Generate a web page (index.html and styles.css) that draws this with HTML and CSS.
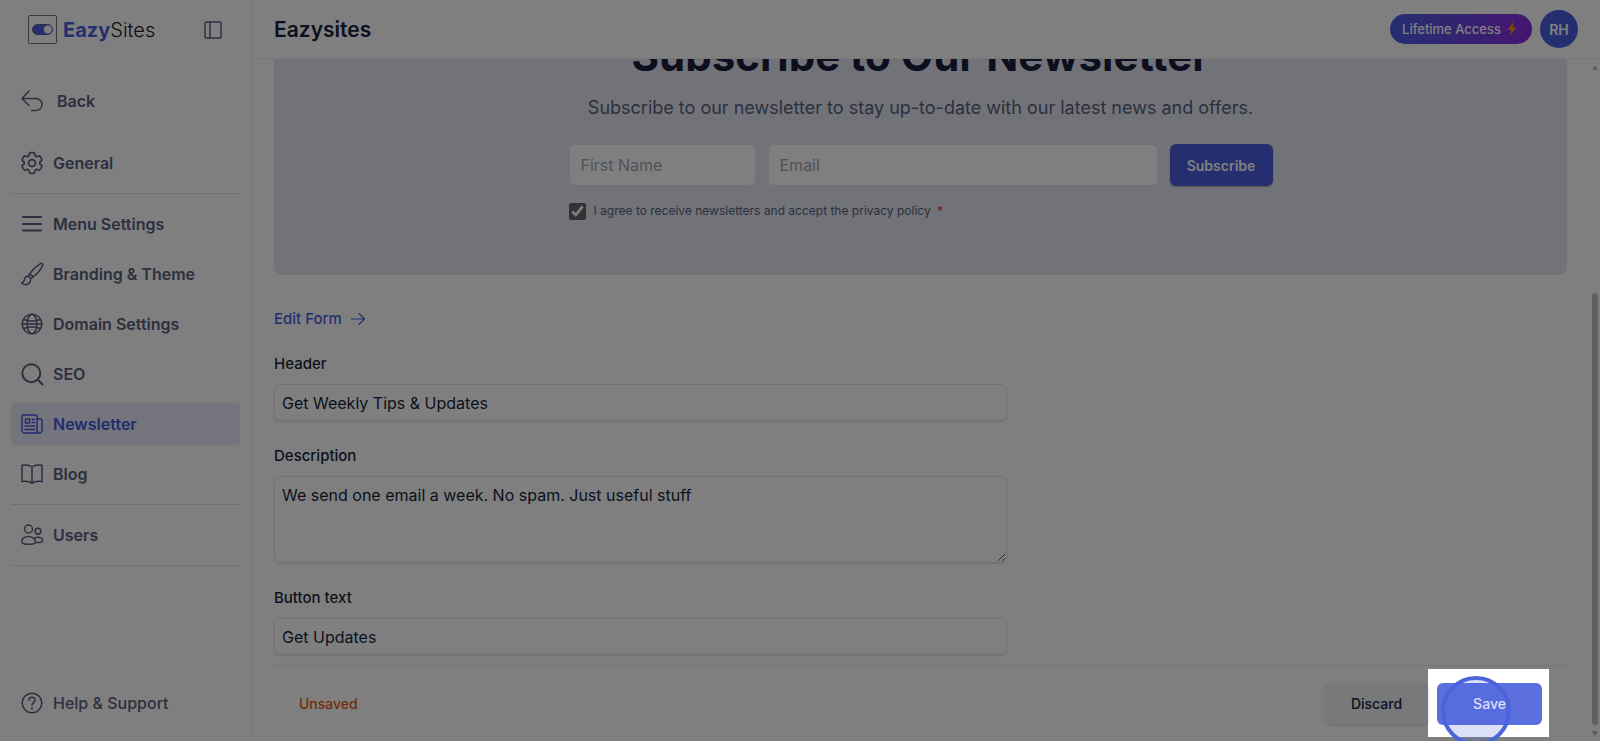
FILE: index.html
```html
<!DOCTYPE html>
<html lang="en">
<head>
    <meta charset="UTF-8">
    <title>Eazysites</title>
    <link rel="stylesheet" href="styles.css">
</head>
<body>
<div class="app">
    <aside class="sidebar">
        <div class="brand">
            <svg class="brand-mark" viewBox="0 0 30 30">
                <rect x="0.5" y="0.5" width="28" height="28" rx="1.5" fill="none" stroke="#777" />
                <rect x="4.5" y="9.5" width="20" height="10" rx="5" fill="#4a5fe0" />
                <circle cx="20" cy="14.500" r="4.500" fill="#fff" stroke="#4a5fe0" />
            </svg>
            <span class="brand-name"><b>Eazy</b>Sites</span>
            <button class="collapse" aria-label="Toggle sidebar">
                <svg viewBox="0 0 18 18"><rect x="1" y="1" width="16" height="16" rx="1.500" /><path d="M6 1v16" /></svg>
            </button>
        </div>

        <a class="item back" href="#">
            <svg viewBox="0 0 24 24"><path d="M9 2 2 9.500l7 7M2 9.500h14a6 6 0 0 1 0 12h-4.500" /></svg>
            Back
        </a>

        <nav class="menu">
            <a class="item" href="#">
                <svg viewBox="1.500 1.500 21 21"><path d="M9.594 3.94c.09-.542.56-.94 1.11-.94h2.593c.55 0 1.02.398 1.11.94l.213 1.281c.063.374.313.686.645.87.074.04.147.083.22.127.325.196.72.257 1.075.124l1.217-.456a1.125 1.125 0 0 1 1.37.49l1.296 2.247a1.125 1.125 0 0 1-.26 1.431l-1.003.827c-.293.241-.438.613-.43.992a7.723 7.723 0 0 1 0 .255c-.008.378.137.75.43.991l1.004.827c.424.35.534.955.26 1.43l-1.298 2.247a1.125 1.125 0 0 1-1.369.491l-1.217-.456c-.355-.133-.75-.072-1.076.124a6.47 6.47 0 0 1-.22.128c-.331.183-.581.495-.644.869l-.213 1.281c-.09.543-.56.94-1.11.94h-2.594c-.55 0-1.019-.398-1.11-.94l-.213-1.281c-.062-.374-.312-.686-.644-.87a6.52 6.52 0 0 1-.22-.127c-.325-.196-.72-.257-1.076-.124l-1.217.456a1.125 1.125 0 0 1-1.369-.49l-1.297-2.247a1.125 1.125 0 0 1 .26-1.431l1.004-.827c.292-.24.437-.613.43-.991a6.932 6.932 0 0 1 0-.255c.007-.38-.138-.751-.43-.992l-1.004-.827a1.125 1.125 0 0 1-.26-1.43l1.297-2.247a1.125 1.125 0 0 1 1.37-.491l1.216.456c.356.133.751.072 1.076-.124.072-.044.146-.086.22-.128.332-.183.582-.495.644-.869l.214-1.28Z" /><circle cx="12" cy="12" r="3" /></svg>
                General
            </a>
            <hr>
            <a class="item" href="#">
                <svg class="bold" viewBox="0 0 24 24"><path d="M3 5h18M3 12h18M3 18.500h18" /></svg>
                Menu Settings
            </a>
            <a class="item" href="#">
                <svg viewBox="0 0 24 24"><path d="M22.300 1.500c.9.700.5 1.800-.1 2.900-2 3.600-5 7.700-9 10.500l-3.400-3.200c2.700-4 6.500-7.500 10-9.600 1-.6 1.900-1.100 2.500-.6ZM9.800 11.700c-1 .4-1.400 1.500-1 2.700l1.500 1.300c1.200.4 2.300.1 2.900-.8M8.800 14.400c-2-.3-3.600.6-4.200 2.300-.5 1.600-.4 3.700-3 4 1.700 2.400 5.400 2.500 7.400.7 1.500-1.400 1.900-3.600 1.300-5.700" /></svg>
                Branding &amp; Theme
            </a>
            <a class="item" href="#">
                <svg viewBox="0 0 24 24"><circle cx="12" cy="12" r="9.800" /><ellipse cx="12" cy="12" rx="4.800" ry="9.800" /><path d="M3.500 7.500c5 1.700 12 1.700 17 0M2.200 12h19.600M3.500 16.500c5-1.700 12-1.700 17 0" /></svg>
                Domain Settings
            </a>
            <a class="item" href="#">
                <svg class="bold" viewBox="0 0 24 24"><circle cx="11.300" cy="11.200" r="9" /><path d="m18 18 4.500 4.500" /></svg>
                SEO
            </a>
            <a class="item active" href="#">
                <svg viewBox="0 0 24 24"><path d="M17 20.500V4.500a1.500 1.500 0 0 0-1.500-1.500h-12A1.500 1.500 0 0 0 2 4.500v14A2.500 2.500 0 0 0 4.500 21h15a2.500 2.500 0 0 0 2.500-2.500V9a2 2 0 0 0-2-2h-3M19.500 21c-1.500 0-2.500-1-2.500-2.500M5.500 7h4v4h-4zM12 7.500h2.500M12 10.500h2.500M5 14h9.500M5 17.500h9.500" /></svg>
                Newsletter
            </a>
            <a class="item" href="#">
                <svg viewBox="0 0 24 24"><path d="M12 5C9.500 3 6 2.500 2 3.300v16.200c4-.7 7.500-.3 10 1.700 2.500-2 6-2.400 10-1.700V3.300C18 2.500 14.500 3 12 5ZM12 5v16" /></svg>
                Blog
            </a>
            <hr>
            <a class="item" href="#">
                <svg viewBox="0 0 24 24"><circle cx="8.500" cy="6" r="4" /><circle cx="18" cy="8.200" r="2.900" /><path d="M8.500 13.500c4 0 6.900 2.600 6.900 5.200 0 1.800-3.500 2.600-6.900 2.600s-6.900-.8-6.900-2.600c0-2.600 2.900-5.200 6.900-5.200ZM14.500 15.500c1-.8 2.200-1.200 3.500-1.200 2.700 0 4.700 1.700 4.700 3.400 0 1.500-3.200 2.100-7.400 1.800" /></svg>
                Users
            </a>
            <hr>
        </nav>

        <a class="item help" href="#">
            <svg viewBox="0 0 24 24"><circle cx="12" cy="12" r="9.800" /><path d="M9 9c.2-1.700 1.400-2.700 3.100-2.700S15 7.400 15 9c0 2.300-3 2.500-3 5.300M12 16.800v1.400" /></svg>
            Help &amp; Support
        </a>
    </aside>

    <div class="content">
        <header class="topbar">
            <h1>Eazysites</h1>
            <button class="lifetime">Lifetime Access
                <svg viewBox="0 0 10 14"><path d="M6 0 0.500 8H4L3 14l6.500-8.500H6z" fill="#f58a1f" /></svg>
            </button>
            <button class="avatar">RH</button>
        </header>

        <main class="scroller">
            <section class="preview">
                <h2>Subscribe to Our Newsletter</h2>
                <p>Subscribe to our newsletter to stay up-to-date with our latest news and offers.</p>
                <form class="signup">
                    <div class="signup-row">
                        <input class="first" type="text" placeholder="First Name" aria-label="First Name">
                        <input class="email" type="email" placeholder="Email" aria-label="Email">
                        <button type="button">Subscribe</button>
                    </div>
                    <label class="agree">
                        <input type="checkbox" checked>
                        <span>I agree to receive newsletters and accept the privacy policy <i>*</i></span>
                    </label>
                </form>
            </section>

            <a class="edit" href="#">Edit Form
                <svg viewBox="0 0 14 12"><path d="M0 6h13M8 0.500 13.500 6 8 11.500" /></svg>
            </a>

            <div class="field">
                <label for="header">Header</label>
                <input id="header" type="text" value="Get Weekly Tips &amp; Updates">
            </div>
            <div class="field">
                <label for="description">Description</label>
                <textarea id="description">We send one email a week. No spam. Just useful stuff</textarea>
            </div>
            <div class="field last">
                <label for="button-text">Button text</label>
                <input id="button-text" type="text" value="Get Updates">
            </div>

            <footer class="savebar">
                <span>Unsaved</span>
                <button class="discard">Discard</button>
                <button class="save">Save</button>
            </footer>
            <div class="scrollbar"><i class="up"></i><i class="thumb"></i><i class="down"></i></div>
        </main>
    </div>
</div>

<div class="spotlight"></div>
<div class="pointer"></div>
</body>
</html>
```
FILE: styles.css
```css
* {
    box-sizing: border-box;
}

body {
    margin: 0;
    overflow: hidden;
    background: #fff;
    color: #1a1f3d;
    font-family: Inter, "Liberation Sans", sans-serif;
    font-size: 16px;
}

button, input, textarea {
    font-family: inherit;
    font-size: inherit;
    color: inherit;
}

button {
    border: 0;
    padding: 0;
    cursor: pointer;
}

svg {
    fill: none;
    stroke: currentColor;
    stroke-width: 1.5;
    stroke-linecap: round;
    stroke-linejoin: round;
    flex: none;
}

.app {
    display: flex;
    height: 100vh;
}

/* sidebar */
.sidebar {
    display: flex;
    flex-direction: column;
    width: 252px;
    padding: 0 11px 17px;
    border-right: 1px solid #f4f4f8;
    color: #5a5f7d;
}

.brand {
    display: flex;
    align-items: center;
    height: 60px;
    padding: 0 18px 0 17px;
    margin-bottom: 20px;
}

.brand-mark {
    width: 30px;
    height: 30px;
    stroke-width: 1;
}

.brand-name {
    flex: 1;
    padding-left: 5px;
    color: #222;
    font-size: 20px;
    font-weight: 300;
}

.brand-name b {
    color: #4a5fe0;
    font-weight: 700;
}

.collapse {
    height: 18px;
    background: none;
    color: #5a5f7d;
}

.collapse svg {
    display: block;
    width: 18px;
    height: 18px;
}

.item {
    display: flex;
    align-items: center;
    gap: 9px;
    height: 42px;
    padding-left: 9px;
    border-radius: 4px;
    color: inherit;
    font-weight: 600;
    text-decoration: none;
}

.item svg {
    width: 24px;
    height: 24px;
}

.item .bold {
    stroke-width: 2;
}

.back {
    gap: 13px;
    margin-bottom: 20px;
}

.menu {
    display: flex;
    flex: 1;
    flex-direction: column;
    gap: 8px;
}

.menu hr {
    width: 100%;
    margin: 1px 0;
    border: 0;
    border-top: 1px solid #dfe1ec;
}

.active {
    background: #e8eaf8;
    color: #4559d8;
}

.help {
    font-weight: 500;
}

/* top bar */
.content {
    display: flex;
    flex: 1;
    flex-direction: column;
    min-width: 0;
}

.topbar {
    display: flex;
    align-items: center;
    gap: 8px;
    height: 59px;
    padding: 0 22px;
    border-bottom: 1px solid #f0f0f5;
}

.topbar h1 {
    flex: 1;
    margin: 0;
    font-size: 21px;
    font-weight: 600;
}

.lifetime {
    display: flex;
    align-items: center;
    gap: 6px;
    height: 30px;
    padding: 0 15px 0 12px;
    border-radius: 15px;
    background: linear-gradient(90deg, #4a5fe0, #8a2be2);
    color: #fff;
    font-size: 13px;
    font-weight: 500;
}

.lifetime svg {
    width: 10px;
    height: 14px;
    stroke: none;
}

.avatar {
    width: 38px;
    height: 38px;
    border-radius: 50%;
    background: #4a5fe0;
    color: #fff;
    font-size: 14px;
    font-weight: 600;
}

/* page, kept scrolled to its end */
.scroller {
    position: relative;
    display: flex;
    flex: 1;
    flex-direction: column;
    justify-content: flex-end;
    min-height: 0;
    padding: 0 33px 0 22px;
    overflow: hidden;
}

.preview {
    display: flex;
    flex: none;
    flex-direction: column;
    align-items: center;
    padding: 64px 0 55px;
    border-radius: 8px;
    background: #e4e6f0;
}

.preview h2 {
    margin: 0 0 14px;
    font-size: 42px;
    font-weight: 700;
    line-height: 48px;
}

.preview p {
    margin: 0 0 22px;
    color: #5a5f7d;
    font-size: 18px;
    line-height: 28px;
}

.signup {
    width: 704px;
}

.signup-row {
    display: flex;
    gap: 12px;
    margin-bottom: 16px;
}

.signup input[type="text"], .signup input[type="email"] {
    min-width: 0;
    height: 42px;
    padding: 0 11px;
    border: 1px solid #e4e6f0;
    border-radius: 6px;
    background: #fff;
}

.signup ::placeholder {
    color: #a3a6b5;
}

.signup .first {
    flex: 1;
}

.signup .email {
    width: 390px;
}

.signup button {
    width: 103px;
    height: 42px;
    border-radius: 6px;
    background: #4a5fe0;
    box-shadow: 0 1px 2px rgba(0, 0, 0, .3);
    color: #fff;
    font-size: 14px;
    font-weight: 600;
}

.agree {
    display: flex;
    align-items: center;
    gap: 8px;
    color: #5a5f7d;
    font-size: 12px;
    line-height: 18px;
}

.agree input {
    width: 17px;
    height: 17px;
    margin: 0;
    accent-color: #666;
}

.agree i {
    margin-left: 3px;
    color: #e5352b;
    font-style: normal;
}

.edit {
    display: flex;
    flex: none;
    align-items: center;
    gap: 9px;
    margin: 34px 0 25px;
    color: #4a5fe0;
    font-size: 15px;
    font-weight: 500;
    line-height: 20px;
    text-decoration: none;
}

.edit svg {
    width: 14px;
    height: 12px;
    stroke-width: 1.2;
}

.field {
    display: flex;
    flex: none;
    flex-direction: column;
    gap: 10px;
    width: 733px;
    margin-bottom: 25px;
}

.last {
    margin-bottom: 10px;
}

.field label {
    font-size: 15px;
    font-weight: 500;
    line-height: 20px;
}

.field input, .field textarea {
    height: 37px;
    padding: 0 7px;
    border: 1px solid #e4e5ee;
    border-radius: 6px;
    background: #fff;
    box-shadow: 0 1px 2px rgba(30, 30, 80, .12);
}

.field textarea {
    height: 87px;
    padding: 8px 7px;
    line-height: 20px;
}

/* save bar */
.savebar {
    display: flex;
    flex: none;
    align-items: center;
    gap: 8px;
    height: 76px;
    padding: 0 25px;
    border-top: 1px solid #ececf2;
}

.savebar span {
    flex: 1;
    color: #e8590c;
    font-size: 14px;
    font-weight: 500;
}

.savebar button {
    width: 105px;
    height: 42px;
    border-radius: 6px;
    font-size: 14px;
    font-weight: 500;
}

.savebar .discard {
    background: #f1f2f6;
    box-shadow: 0 1px 2px rgba(0, 0, 0, .12);
}

.savebar .save {
    background: #5b6fdf;
    color: #fff;
}

.scrollbar {
    position: absolute;
    top: 0;
    right: 2px;
    bottom: 0;
    display: flex;
    flex-direction: column;
    align-items: center;
    width: 6px;
    padding: 6px 0 5px;
}

.scrollbar i {
    border: 3px solid transparent;
}

.scrollbar .up {
    border-top: 0;
    border-bottom: 5px solid #c0c0c0;
}

.scrollbar .down {
    margin-top: 6px;
    border-top: 5px solid #b0b0b0;
    border-bottom: 0;
}

.scrollbar .thumb {
    flex: none;
    height: 432px;
    margin-top: auto;
    border-color: #c1c1c1;
    border-radius: 3px;
}

/* dimmed page with a hole over the Save button */
.spotlight {
    position: fixed;
    right: 51px;
    bottom: 4px;
    width: 121px;
    height: 68px;
    box-shadow: 0 0 0 2000px rgba(0, 0, 0, .5);
    pointer-events: none;
}

.pointer {
    position: fixed;
    right: 89px;
    bottom: -5px;
    width: 70px;
    height: 70px;
    border: 4px solid #4a64dc;
    border-radius: 50%;
    background: rgba(74, 100, 220, .2);
    pointer-events: none;
}
```
